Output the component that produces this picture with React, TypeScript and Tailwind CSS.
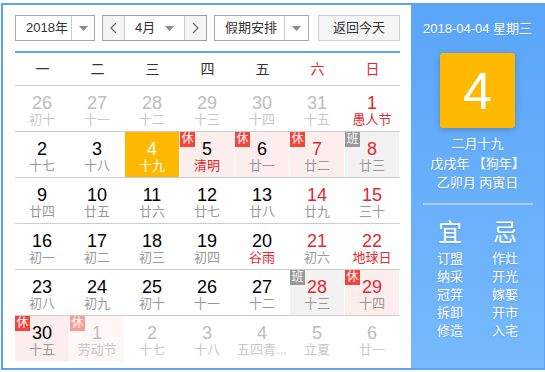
type Day = {
  d: number;
  l: string;
  other?: boolean;
  red?: boolean;
  lred?: boolean;
  badge?: '休' | '班';
  today?: boolean;
};

const WEEK = ['一', '二', '三', '四', '五', '六', '日'];

const ROWS: Day[][] = [
  [
    { d: 26, l: '初十', other: true },
    { d: 27, l: '十一', other: true },
    { d: 28, l: '十二', other: true },
    { d: 29, l: '十三', other: true },
    { d: 30, l: '十四', other: true },
    { d: 31, l: '十五', other: true },
    { d: 1, l: '愚人节', red: true, lred: true },
  ],
  [
    { d: 2, l: '十七' },
    { d: 3, l: '十八' },
    { d: 4, l: '十九', today: true },
    { d: 5, l: '清明', lred: true, badge: '休' },
    { d: 6, l: '廿一', badge: '休' },
    { d: 7, l: '廿二', red: true, badge: '休' },
    { d: 8, l: '廿三', red: true, badge: '班' },
  ],
  [
    { d: 9, l: '廿四' },
    { d: 10, l: '廿五' },
    { d: 11, l: '廿六' },
    { d: 12, l: '廿七' },
    { d: 13, l: '廿八' },
    { d: 14, l: '廿九', red: true },
    { d: 15, l: '三十', red: true },
  ],
  [
    { d: 16, l: '初一' },
    { d: 17, l: '初二' },
    { d: 18, l: '初三' },
    { d: 19, l: '初四' },
    { d: 20, l: '谷雨', lred: true },
    { d: 21, l: '初六', red: true },
    { d: 22, l: '地球日', red: true, lred: true },
  ],
  [
    { d: 23, l: '初八' },
    { d: 24, l: '初九' },
    { d: 25, l: '初十' },
    { d: 26, l: '十一' },
    { d: 27, l: '十二' },
    { d: 28, l: '十三', red: true, badge: '班' },
    { d: 29, l: '十四', red: true, badge: '休' },
  ],
  [
    { d: 30, l: '十五', badge: '休' },
    { d: 1, l: '劳动节', other: true, badge: '休' },
    { d: 2, l: '十七', other: true },
    { d: 3, l: '十八', other: true },
    { d: 4, l: '五四青...', other: true },
    { d: 5, l: '立夏', other: true },
    { d: 6, l: '廿一', other: true },
  ],
];

const YI = ['订盟', '纳采', '冠笄', '拆卸', '修造'];
const JI = ['作灶', '开光', '嫁娶', '开市', '入宅'];

function Caret() {
  return (
    <svg width="9" height="5" viewBox="0 0 9 5">
      <path d="M0 0h9L4.5 5z" fill="#8a8a8a" />
    </svg>
  );
}

function Chevron({ right }: { right?: boolean }) {
  return (
    <svg width="7" height="12" viewBox="0 0 7 12">
      <path
        d={right ? 'M1 1l5 5-5 5' : 'M6 1L1 6l5 5'}
        fill="none"
        stroke="#666"
        strokeWidth="1.2"
      />
    </svg>
  );
}

function DayCell({ day }: { day: Day }) {
  let bg = 'bg-white';
  if (day.today) bg = 'bg-[#ffb800]';
  else if (day.badge === '休') bg = day.other ? 'bg-[#fff6f6]' : 'bg-[#fdeeee]';
  else if (day.badge === '班') bg = 'bg-[#f2f2f2]';

  let num = 'text-black';
  if (day.today) num = 'text-white';
  else if (day.other) num = 'text-[#bdbdbd]';
  else if (day.red) num = 'text-[#e5272d]';

  let lunar = 'text-[#999]';
  if (day.today) lunar = 'text-white';
  else if (day.other) lunar = 'text-[#c8c8c8]';
  else if (day.lred) lunar = 'text-[#e5272d]';

  return (
    <div className={`relative h-[45px] border-r border-white flex flex-col items-center pt-[7px] ${bg}`}>
      {day.badge && (
        <span
          className={`absolute top-0 left-0 w-[15px] h-[15px] text-[12px] leading-[15px] text-center text-white ${
            day.badge === '休' ? 'bg-[#f5443b]' : 'bg-[#999]'
          } ${day.other ? 'opacity-50' : ''}`}
        >
          {day.badge}
        </span>
      )}
      <span className={`text-[18px] leading-[20px] ${num}`}>{day.d}</span>
      <span className={`text-[13px] leading-[14px] whitespace-nowrap ${lunar}`}>{day.l}</span>
    </div>
  );
}

export default function App() {
  return (
    <div className="w-[545px] h-[372px] bg-white pl-px pt-[3px] font-['Liberation_Sans','Noto_Sans_CJK_SC',sans-serif]">
      <div className="flex w-[545px] h-[367px] border-2 border-[#5ba3f3]">
        <div className="w-[408px] shrink-0 pl-3 pt-[10px]">
          <div className="flex items-center h-[26px] text-[13px] text-[#333]">
            <div className="flex w-[80px] h-[26px] border border-[#a9a9a9] bg-white">
              <div className="w-[55px] pl-[10px] leading-[24px]">2018年</div>
              <div className="flex-1 border-l border-[#ccc] flex items-center justify-center">
                <Caret />
              </div>
            </div>
            <div className="flex ml-[7px] w-[105px] h-[26px] border border-[#a0a0a0] bg-white">
              <div className="w-[22px] bg-[#f4f4f4] border-r border-[#ccc] flex items-center justify-center">
                <Chevron />
              </div>
              <div className="flex-1 flex items-center">
                <span className="pl-[10px] w-[40px]">4月</span>
                <Caret />
              </div>
              <div className="w-[22px] bg-[#f4f4f4] border-l border-[#ccc] flex items-center justify-center">
                <Chevron right />
              </div>
            </div>
            <div className="flex ml-[7px] w-[95px] h-[26px] border border-[#a9a9a9] bg-white">
              <div className="w-[69px] pl-[10px] leading-[24px]">假期安排</div>
              <div className="flex-1 border-l border-[#ccc] flex items-center justify-center">
                <Caret />
              </div>
            </div>
            <div className="ml-[9px] w-[82px] h-[26px] border border-[#ccc] bg-[#f5f5f5] text-center leading-[24px]">
              返回今天
            </div>
          </div>

          <div className="w-[385px] mt-[10px] h-[2px] bg-[#5ba3f3]" />

          <div className="w-[385px] grid grid-cols-7 h-[32px] items-center text-[14px] text-center text-[#333]">
            {WEEK.map((w, i) => (
              <span key={w} className={i >= 5 ? 'text-[#e5272d]' : ''}>
                {w}
              </span>
            ))}
          </div>

          <div className="w-[385px]">
            {ROWS.map((row, r) => (
              <div key={r} className="grid grid-cols-7 border-t border-[#ccc]">
                {row.map((day, i) => (
                  <DayCell key={i} day={day} />
                ))}
              </div>
            ))}
          </div>
        </div>

        <div className="flex-1 bg-gradient-to-b from-[#5aa5f8] to-[#76b9fc] text-white flex flex-col items-center pt-4">
          <div className="text-[13px] leading-[16px] [text-shadow:0_1px_1px_rgba(0,0,0,0.1)]">2018-04-04 星期三</div>
          <div className="mt-[16px] w-[75px] h-[75px] rounded-[3px] bg-[#ffb800] shadow-[0_2px_6px_rgba(0,0,0,0.2)] flex items-center justify-center text-[52px] leading-none">
            4
          </div>
          <div className="mt-[6px] text-[13px] leading-[19.5px] text-center [text-shadow:0_1px_1px_rgba(0,0,0,0.1)]">
            <div>二月十九</div>
            <div>戊戌年 【狗年】</div>
            <div>乙卯月 丙寅日</div>
          </div>
          <div className="mt-[10px] w-[110px] h-[2px] bg-[#a4cefb]" />
          <div className="flex mt-[14px] [text-shadow:0_1px_2px_rgba(0,0,0,0.15)]">
            <div className="w-[55px] flex flex-col items-center">
              <div className="text-[24px] leading-[28px]">宜</div>
              <div className="mt-[3px] text-[13px] leading-[18px] text-center">
                {YI.map((t) => (
                  <div key={t}>{t}</div>
                ))}
              </div>
            </div>
            <div className="w-[55px] flex flex-col items-center">
              <div className="text-[24px] leading-[28px]">忌</div>
              <div className="mt-[3px] text-[13px] leading-[18px] text-center">
                {JI.map((t) => (
                  <div key={t}>{t}</div>
                ))}
              </div>
            </div>
          </div>
        </div>
      </div>
    </div>
  );
}
